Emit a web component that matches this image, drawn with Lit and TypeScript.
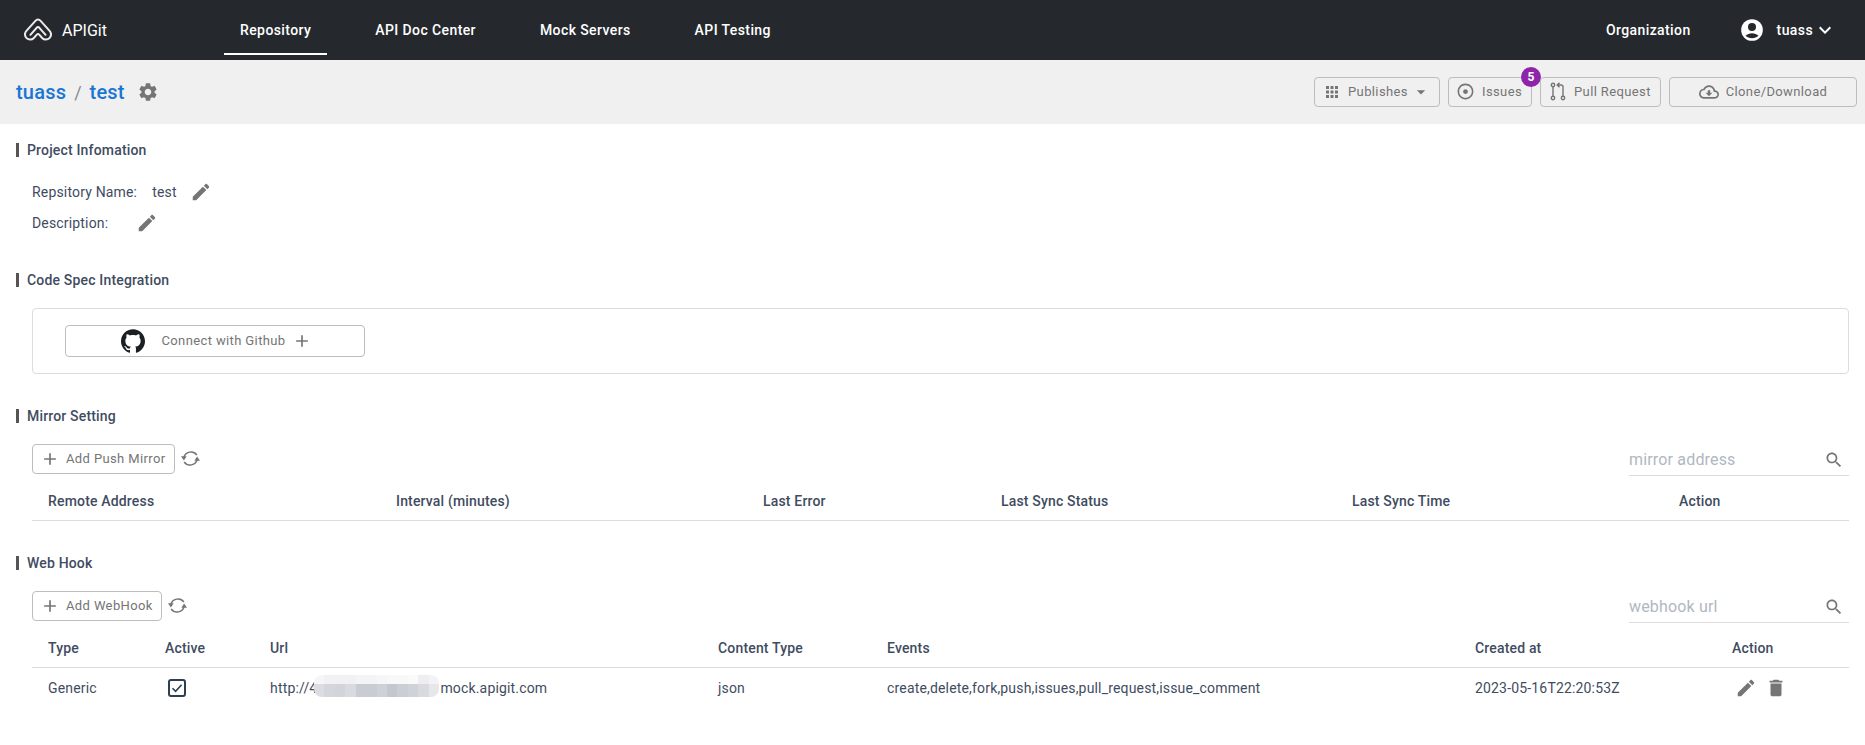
import { LitElement, html, css } from "lit";
import { customElement } from "lit/decorators.js";

const P = {
  edit: "M3 17.25V21h3.75L17.81 9.94l-3.75-3.75L3 17.25zM20.71 7.04c.39-.39.39-1.02 0-1.41l-2.34-2.34c-.39-.39-1.02-.39-1.41 0l-1.83 1.83 3.75 3.75 1.83-1.83z",
  gear: "M19.14 12.94c.04-.3.06-.61.06-.94 0-.32-.02-.64-.07-.94l2.03-1.58c.18-.14.23-.41.12-.61l-1.92-3.32c-.12-.22-.37-.29-.59-.22l-2.39.96c-.5-.38-1.03-.7-1.62-.94l-.36-2.54c-.04-.24-.24-.41-.48-.41h-3.84c-.24 0-.43.17-.47.41l-.36 2.54c-.59.24-1.13.57-1.62.94l-2.39-.96c-.22-.08-.47 0-.59.22L2.74 8.87c-.12.21-.08.47.12.61l2.03 1.58c-.05.3-.09.63-.09.94s.02.64.07.94l-2.03 1.58c-.18.14-.23.41-.12.61l1.92 3.32c.12.22.37.29.59.22l2.39-.96c.5.38 1.03.7 1.62.94l.36 2.54c.05.24.24.41.48.41h3.84c.24 0 .44-.17.47-.41l.36-2.54c.59-.24 1.13-.56 1.62-.94l2.39.96c.22.08.47 0 .59-.22l1.92-3.32c.12-.22.07-.47-.12-.61l-2.01-1.58zM12 15.6c-1.98 0-3.6-1.62-3.6-3.6s1.62-3.6 3.6-3.6 3.6 1.62 3.6 3.6-1.62 3.6-3.6 3.6z",
  apps: "M4 8h4V4H4v4zm6 12h4v-4h-4v4zm-6 0h4v-4H4v4zm0-6h4v-4H4v4zm6 0h4v-4h-4v4zm6-10v4h4V4h-4zm-6 4h4V4h-4v4zm6 6h4v-4h-4v4zm0 6h4v-4h-4v4z",
  drop: "M7 10l5 5 5-5z",
  adjust: "M12 2C6.49 2 2 6.49 2 12s4.49 10 10 10 10-4.49 10-10S17.51 2 12 2zm0 18c-4.41 0-8-3.59-8-8s3.59-8 8-8 8 3.59 8 8-3.59 8-8 8zm3-8c0 1.66-1.34 3-3 3s-3-1.34-3-3 1.34-3 3-3 3 1.34 3 3z",
  cloud: "M19.35 10.04C18.67 6.59 15.64 4 12 4 9.11 4 6.6 5.64 5.35 8.04 2.34 8.36 0 10.91 0 14c0 3.31 2.69 6 6 6h13c2.76 0 5-2.24 5-5 0-2.64-2.05-4.78-4.65-4.96zM19 18H6c-2.21 0-4-1.79-4-4 0-2.05 1.53-3.76 3.56-3.97l1.07-.11.5-.95C8.08 7.14 9.94 6 12 6c2.62 0 4.88 1.86 5.39 4.43l.3 1.5 1.53.11c1.56.1 2.78 1.41 2.78 2.96 0 1.65-1.35 3-3 3zm-5.55-8h-2.9v3H8l4 4 4-4h-2.55z",
  search: "M15.5 14h-.79l-.28-.27C15.41 12.59 16 11.11 16 9.5 16 5.91 13.09 3 9.5 3S3 5.91 3 9.5 5.91 16 9.5 16c1.61 0 3.09-.59 4.23-1.57l.27.28v.79l5 4.99L20.49 19l-4.99-5zm-6 0C7.01 14 5 11.99 5 9.5S7.01 5 9.5 5 14 7.01 14 9.5 11.99 14 9.5 14z",
  add: "M19 13h-6v6h-2v-6H5v-2h6V5h2v6h6v2z",
  del: "M6 19c0 1.1.9 2 2 2h8c1.1 0 2-.9 2-2V7H6v12zM19 4h-3.5l-1-1h-5l-1 1H5v2h14V4z",
  more: "M16.59 8.59L12 13.17 7.41 8.59 6 10l6 6 6-6z",
  gh: "M12 .297c-6.63 0-12 5.373-12 12 0 5.303 3.438 9.8 8.205 11.385.6.113.82-.258.82-.577 0-.285-.01-1.04-.015-2.04-3.338.724-4.042-1.61-4.042-1.61C4.422 18.07 3.633 17.7 3.633 17.7c-1.087-.744.084-.729.084-.729 1.205.084 1.838 1.236 1.838 1.236 1.07 1.835 2.809 1.305 3.495.998.108-.776.417-1.305.76-1.605-2.665-.3-5.466-1.332-5.466-5.93 0-1.31.465-2.38 1.235-3.22-.135-.303-.54-1.523.105-3.176 0 0 1.005-.322 3.3 1.23.96-.267 1.98-.399 3-.405 1.02.006 2.04.138 3 .405 2.28-1.552 3.285-1.23 3.285-1.23.645 1.653.24 2.873.12 3.176.765.84 1.23 1.91 1.23 3.22 0 4.61-2.805 5.625-5.475 5.92.42.36.81 1.096.81 2.22 0 1.606-.015 2.896-.015 3.286 0 .315.21.69.825.57C20.565 22.092 24 17.592 24 12.297c0-6.627-5.373-12-12-12z",
};

const ico = (d: string, s: number) =>
  html`<svg class="ico" width=${s} height=${s} viewBox="0 0 24 24"><path d=${d}></path></svg>`;

const syncIcon = html`<svg class="sync" width="19" height="19" viewBox="0 0 24 24">
  <path class="line" d="M20 7.5A9.2 9.2 0 0 0 3.6 11"></path>
  <path class="line" d="M4 16.5A9.2 9.2 0 0 0 20.4 13"></path>
  <path d="M0 9.2H7.2L3.6 14.4Z"></path>
  <path d="M16.8 14.8H24L20.4 9.6Z"></path>
</svg>`;

const BLUR_TOP = ["#f6f6f8", "#f1f1f4", "#f1f1f4", "#f1f1f4", "#f4f4f6", "#f4f4f6", "#f6f6f8", "#f8f8f9", "#f8f8f9", "#fafafa", "#eeeef1", "#f3f3f5"];
const BLUR_BOTTOM = ["#dcdde2", "#d4d6dc", "#d2d4da", "#d8dadf", "#c9ccd3", "#c9ccd3", "#cfd1d8", "#c4c7cf", "#ccced6", "#d0d2d9", "#d8dadf", "#e6e7ea"];

@customElement("app-root")
export class AppRoot extends LitElement {
  static styles = css`
    :host { display: block; height: 745px; background: #fff; font-family: Roboto, "Liberation Sans", sans-serif; font-size: 14px; letter-spacing: .17px; color: #3f4c5f; overflow: hidden; }
    .ico { display: block; flex: none; fill: #757575; }
    .sync { display: block; flex: none; fill: #757575; }
    .sync .line { fill: none; stroke: #757575; stroke-width: 1.9; }

    header { display: flex; align-items: center; height: 60px; background: #25292d; color: #fff; font-weight: 500; letter-spacing: .4px; padding: 0 28px 0 24px; }
    .logo { display: block; flex: none; fill: none; stroke: #ececec; stroke-width: 2; stroke-linejoin: round; stroke-linecap: round; }
    .brand { margin-left: 10px; font-size: 16px; font-weight: 400; letter-spacing: 0; width: 162px; flex: none; }
    nav { display: flex; gap: 32px; height: 60px; }
    .tab { display: flex; align-items: center; padding: 0 16px; position: relative; }
    .tab.on::after { content: ""; position: absolute; left: 0; right: 0; bottom: 5px; height: 2px; background: #fff; }
    .user { margin-left: auto; display: flex; align-items: center; }
    .avatar { display: block; margin: 0 12px 0 48px; flex: none; }
    .more { fill: #fff; }

    .bar { display: flex; align-items: center; height: 64px; background: #f0f0f0; padding: 0 8px 0 16px; }
    .crumb { font-size: 20px; font-weight: 500; letter-spacing: .2px; color: #1976d2; }
    .sep { font-size: 18px; color: #8a8a8a; margin: 0 8px; font-weight: 400; letter-spacing: 0; }
    .gear { margin-left: 12px; }
    .actions { margin-left: auto; display: flex; gap: 8px; }

    .btn { position: relative; display: flex; align-items: center; box-sizing: border-box; height: 30px; padding-bottom: 1px; border: 1px solid #bdbdbd; border-radius: 4px; font-size: 13px; letter-spacing: .38px; color: #757575; white-space: nowrap; }
    .publish { width: 126px; padding-left: 8px; }
    .publish .ico:first-child { margin-right: 7px; }
    .publish .ico:last-child { margin-left: 3px; }
    .issues { width: 84px; padding-left: 7px; gap: 7px; }
    .pull { width: 121px; padding-left: 9px; gap: 8px; }
    .clone { width: 188px; justify-content: center; gap: 7px; }
    .pr { display: block; flex: none; fill: none; stroke: #757575; stroke-width: 1.4; }
    .badge { position: absolute; top: -11px; right: -10px; width: 20px; height: 20px; border-radius: 50%; background: #8e24aa; color: #fff; font-size: 12px; font-weight: 700; letter-spacing: 0; display: flex; align-items: center; justify-content: center; }

    main { padding: 16px 16px 0; }
    h2 { display: flex; align-items: center; gap: 8px; height: 20px; margin: 0; font-size: 14px; font-weight: 500; color: #3f4c5f; }
    h2::before { content: ""; width: 3px; height: 14px; background: #555; }
    section + section { margin-top: 32px; }

    .info { margin: 17px 0 0 16px; display: flex; flex-direction: column; gap: 1px; }
    .row { display: flex; align-items: center; height: 30px; }
    .val { margin-left: 15px; }
    .row .ico { margin-left: 13px; }

    .box { box-sizing: border-box; height: 66px; margin: 18px 0 0 16px; border: 1px solid #dcdcdc; border-radius: 4px; padding: 16px 32px; }
    .gh { width: 300px; height: 32px; justify-content: center; box-sizing: border-box; gap: 16px; padding-left: 3px; }
    .gh .plus { margin-left: -10px; }
    .ghmark { fill: #1b1f23; }

    .tools { display: flex; align-items: flex-start; margin: 18px 0 0 16px; height: 32px; }
    .add { gap: 6px; padding: 0 8px 1px 7px; }
    .tools .sync { margin: 5px 0 0 6px; }
    .search { margin-left: auto; width: 220px; height: 32px; box-sizing: border-box; border-bottom: 1px solid #dcdcdc; display: flex; align-items: center; justify-content: space-between; font-size: 16px; color: #b0b7c0; padding-right: 5px; }

    .grid { display: grid; margin-left: 16px; }
    .grid > div { display: flex; align-items: center; padding-left: 16px; white-space: nowrap; }
    .mirror { grid-template-columns: 348px 367px 238px 351px 327px 186px; }
    .hook { grid-template-columns: 117px 105px 448px 169px 588px 257px 133px; }
    .head { margin-top: 6px; }
    .head > div { height: 38px; font-weight: 500; border-bottom: 1px solid #dcdcdc; }
    .body > div { height: 40px; }
    .check { display: block; margin-left: 3px; fill: none; stroke: #2f3e50; stroke-width: 2; }
    .url { position: relative; }
    .pixels { position: absolute; left: 60px; top: 7px; width: 125px; height: 22px; display: grid; grid-template-columns: repeat(12, 1fr); grid-template-rows: 9px 13px; border-radius: 8px; overflow: hidden; }
    .mock { margin-left: 123px; }
    .cell-act .ico:first-child { margin-left: 3px; }
    .cell-act .ico + .ico { margin-left: 8px; }
  `;

  private pixels() {
    return html`<div class="pixels">
      ${BLUR_TOP.map((c) => html`<i style="background:${c}"></i>`)}
      ${BLUR_BOTTOM.map((c) => html`<i style="background:${c}"></i>`)}
    </div>`;
  }

  render() {
    return html`
      <header>
        <svg class="logo" width="28" height="24" viewBox="0 0 28 24">
          <path d="M14 1.6Q15.4 1.6 16.6 2.9L25.6 12.9A4.9 4.9 0 0 1 18.2 20L15.2 16.6Q14 15.4 12.8 16.6L9.8 20A4.9 4.9 0 0 1 2.4 12.9L11.4 2.9Q12.6 1.6 14 1.6Z"></path>
          <path d="M6.4 16.8L12.6 9.8Q14 8.4 15.4 9.8L21.6 16.8"></path>
        </svg>
        <div class="brand">APIGit</div>
        <nav>
          <div class="tab on">Repository</div>
          <div class="tab">API Doc Center</div>
          <div class="tab">Mock Servers</div>
          <div class="tab">API Testing</div>
        </nav>
        <div class="user">
          <span>Organization</span>
          <svg class="avatar" width="26" height="26" viewBox="0 0 24 24">
            <circle cx="12" cy="12" r="10" fill="#fff"></circle>
            <circle cx="12" cy="9.3" r="3.7" fill="#25292d"></circle>
            <path fill="#25292d" d="M6 17.4C7.5 15.7 9.7 14.9 12 14.9s4.5.8 6 2.5C16.5 18.9 14.3 19.7 12 19.7S7.5 18.9 6 17.4Z"></path>
          </svg>
          <span>tuass</span>
          <svg class="ico more" width="24" height="24" viewBox="0 0 24 24"><path d=${P.more}></path></svg>
        </div>
      </header>

      <div class="bar">
        <span class="crumb">tuass</span><span class="sep">/</span><span class="crumb">test</span>
        <span class="gear">${ico(P.gear, 22)}</span>
        <div class="actions">
          <div class="btn publish">${ico(P.apps, 18)}<span>Publishes</span>${ico(P.drop, 20)}</div>
          <div class="btn issues">${ico(P.adjust, 19)}<span>Issues</span><span class="badge">5</span></div>
          <div class="btn pull">
            <svg class="pr" width="16" height="19" viewBox="0 0 16 19">
              <circle cx="3" cy="3" r="1.7"></circle><circle cx="3" cy="16" r="1.7"></circle><circle cx="13" cy="16" r="1.7"></circle>
              <path d="M3 4.7V14.3M13 14.3V5Q13 3 11 3H7.5M9.5 .8L7.2 3L9.5 5.2"></path>
            </svg>
            <span>Pull Request</span>
          </div>
          <div class="btn clone">${ico(P.cloud, 20)}<span>Clone/Download</span></div>
        </div>
      </div>

      <main>
        <section>
          <h2>Project Infomation</h2>
          <div class="info">
            <div class="row"><span>Repsitory Name:</span><span class="val">test</span>${ico(P.edit, 22)}</div>
            <div class="row"><span>Description:</span><span class="val"></span>${ico(P.edit, 22)}</div>
          </div>
        </section>

        <section>
          <h2>Code Spec Integration</h2>
          <div class="box">
            <div class="btn gh">
              <svg class="ghmark" width="24" height="24" viewBox="0 0 24 24"><path d=${P.gh}></path></svg>
              <span>Connect with Github</span>
              <span class="plus">${ico(P.add, 20)}</span>
            </div>
          </div>
        </section>

        <section>
          <h2>Mirror Setting</h2>
          <div class="tools">
            <div class="btn add">${ico(P.add, 20)}<span>Add Push Mirror</span></div>
            ${syncIcon}
            <div class="search"><span>mirror address</span>${ico(P.search, 20)}</div>
          </div>
          <div class="grid mirror head">
            <div>Remote Address</div><div>Interval (minutes)</div><div>Last Error</div>
            <div>Last Sync Status</div><div>Last Sync Time</div><div>Action</div>
          </div>
        </section>

        <section>
          <h2>Web Hook</h2>
          <div class="tools">
            <div class="btn add">${ico(P.add, 20)}<span>Add WebHook</span></div>
            ${syncIcon}
            <div class="search"><span>webhook url</span>${ico(P.search, 20)}</div>
          </div>
          <div class="grid hook head">
            <div>Type</div><div>Active</div><div>Url</div><div>Content Type</div>
            <div>Events</div><div>Created at</div><div>Action</div>
          </div>
          <div class="grid hook body">
            <div>Generic</div>
            <div>
              <svg class="check" width="18" height="18" viewBox="0 0 18 18">
                <rect x="1" y="1" width="16" height="16" rx="2"></rect>
                <path stroke-width="1.6" d="M4.5 9.2L7.6 12.3L13.6 5.8"></path>
              </svg>
            </div>
            <div class="url">http://4<span class="mock">mock.apigit.com</span>${this.pixels()}</div>
            <div>json</div>
            <div>create,delete,fork,push,issues,pull_request,issue_comment</div>
            <div>2023-05-16T22:20:53Z</div>
            <div class="cell-act">${ico(P.edit, 22)}${ico(P.del, 22)}</div>
          </div>
        </section>
      </main>
    `;
  }
}
